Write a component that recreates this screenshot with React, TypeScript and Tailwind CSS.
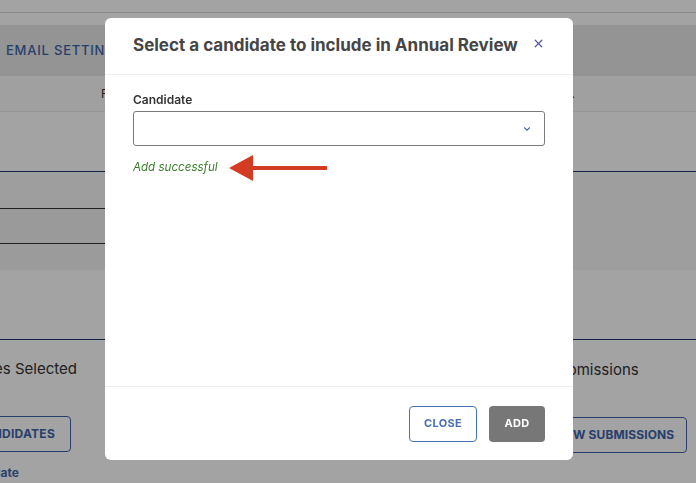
import { X, ChevronDown } from "lucide-react";

const font = { fontFamily: "Inter, 'Noto Sans', sans-serif" };

function Background() {
  return (
    <div className="w-[696px] h-[483px] bg-white overflow-hidden relative" style={font}>
      <div className="h-[13px] border-b border-[#d6d6d6]" />
      <div className="h-[12px]" />
      <div className="h-[51px] bg-[#e8e8e8] flex items-center pl-[6px]">
        <span className="text-[13px] font-medium tracking-[0.06em] text-[#3d64a8] whitespace-nowrap">
          EMAIL SETTINGS
        </span>
      </div>
      <div className="h-[36px] bg-[#fbfbfb] border-b border-[#ececec] flex items-center justify-between pl-[101px] pr-[121px]">
        <span className="text-[12px] text-[#333] whitespace-nowrap">F</span>
        <span className="text-[12px] text-[#333] whitespace-nowrap">.</span>
      </div>
      <div className="h-[60px] border-b border-[#1e3a6e]" />
      <div className="h-[98px] bg-[#f8f8f8] flex flex-col">
        <div className="w-[320px] h-[37px] border-b border-[#333]" />
        <div className="w-[320px] h-[35px] bg-[#f1f1f1] border-b border-[#333]" />
        <div className="w-[320px] h-[26px] bg-[#f2f2f2]" />
      </div>
      <div className="h-[70px] border-b border-[#1e3a6e]" />
      <div className="flex justify-between">
        <div className="w-[80px] flex flex-col items-end">
          <div className="w-full flex justify-end pt-[18px] pr-[3px] whitespace-nowrap">
            <span className="text-[15px] text-[#333]">Candidates Selected</span>
          </div>
          <div className="w-full flex justify-end pt-[35px] pr-[9px]">
            <div className="h-[36px] shrink-0 border border-[#3d64a8] rounded-[4px] px-[15px] flex items-center whitespace-nowrap">
              <span className="text-[12px] font-bold text-[#3d64a8] tracking-[0.02em]">ADD CANDIDATES</span>
            </div>
          </div>
          <div className="w-full flex justify-end pt-[12px] pr-[61px] whitespace-nowrap">
            <span className="text-[12px] font-bold text-[#3d64a8]">Remove Candidate</span>
          </div>
        </div>
        <div className="w-[160px] flex flex-col items-start pr-[8px]">
          <div className="pt-[17px] pl-[13px] whitespace-nowrap">
            <span className="text-[15px] text-[#333]">Submissions</span>
          </div>
          <div className="pt-[35px] pl-[4px]">
            <div className="h-[36px] border border-[#3d64a8] rounded-[4px] px-[12px] flex items-center whitespace-nowrap">
              <span className="text-[12px] font-bold text-[#3d64a8] tracking-[0.01em]">VIEW SUBMISSIONS</span>
            </div>
          </div>
        </div>
      </div>
    </div>
  );
}

function Arrow() {
  return (
    <svg width="98" height="26" viewBox="0 0 98 26" className="ml-[11px]">
      <polygon points="0,13 24,0 24,26" fill="#d33b22" />
      <rect x="22" y="11" width="76" height="4" fill="#d33b22" />
    </svg>
  );
}

function Modal() {
  return (
    <div className="fixed inset-0 bg-black/[0.36] pt-[18px] pl-[105px]" style={font}>
      <div className="w-[468px] h-[442px] bg-white rounded-[6px] flex flex-col">
        <div className="h-[57px] border-b border-[#efefef] flex items-center justify-between pl-[28px] pr-[28px]">
          <span className="text-[17px] font-bold text-[#454545] whitespace-nowrap">
            Select a candidate to include in Annual Review
          </span>
          <X size={13} strokeWidth={2.2} color="#5b55a8" className="-mt-[6px]" />
        </div>
        <div className="flex-1 px-[28px] pt-[17px]">
          <div className="text-[12px] font-semibold text-[#333] leading-[16px]">Candidate</div>
          <div className="mt-[3px] h-[35px] border border-[#7b7b7b] rounded-[3px] flex items-center justify-end pr-[12px]">
            <ChevronDown size={10} strokeWidth={2.6} color="#5068a8" />
          </div>
          <div className="mt-[9px] flex items-center">
            <span className="text-[11.6px] italic text-[#3a7f2b] whitespace-nowrap">Add successful</span>
            <Arrow />
          </div>
        </div>
        <div className="h-[74px] border-t border-[#efefef] flex items-center justify-end gap-[12px] pr-[28px]">
          <button className="w-[68px] h-[36px] border border-[#4a70b4] rounded-[4px] text-[11px] font-bold text-[#4a70b4] tracking-[0.03em]">
            CLOSE
          </button>
          <button className="w-[56px] h-[36px] bg-[#777777] rounded-[4px] text-[11px] font-bold text-white tracking-[0.03em]">
            ADD
          </button>
        </div>
      </div>
    </div>
  );
}

export default function App() {
  return (
    <div className="relative w-[696px] h-[483px] overflow-hidden">
      <Background />
      <Modal />
    </div>
  );
}
